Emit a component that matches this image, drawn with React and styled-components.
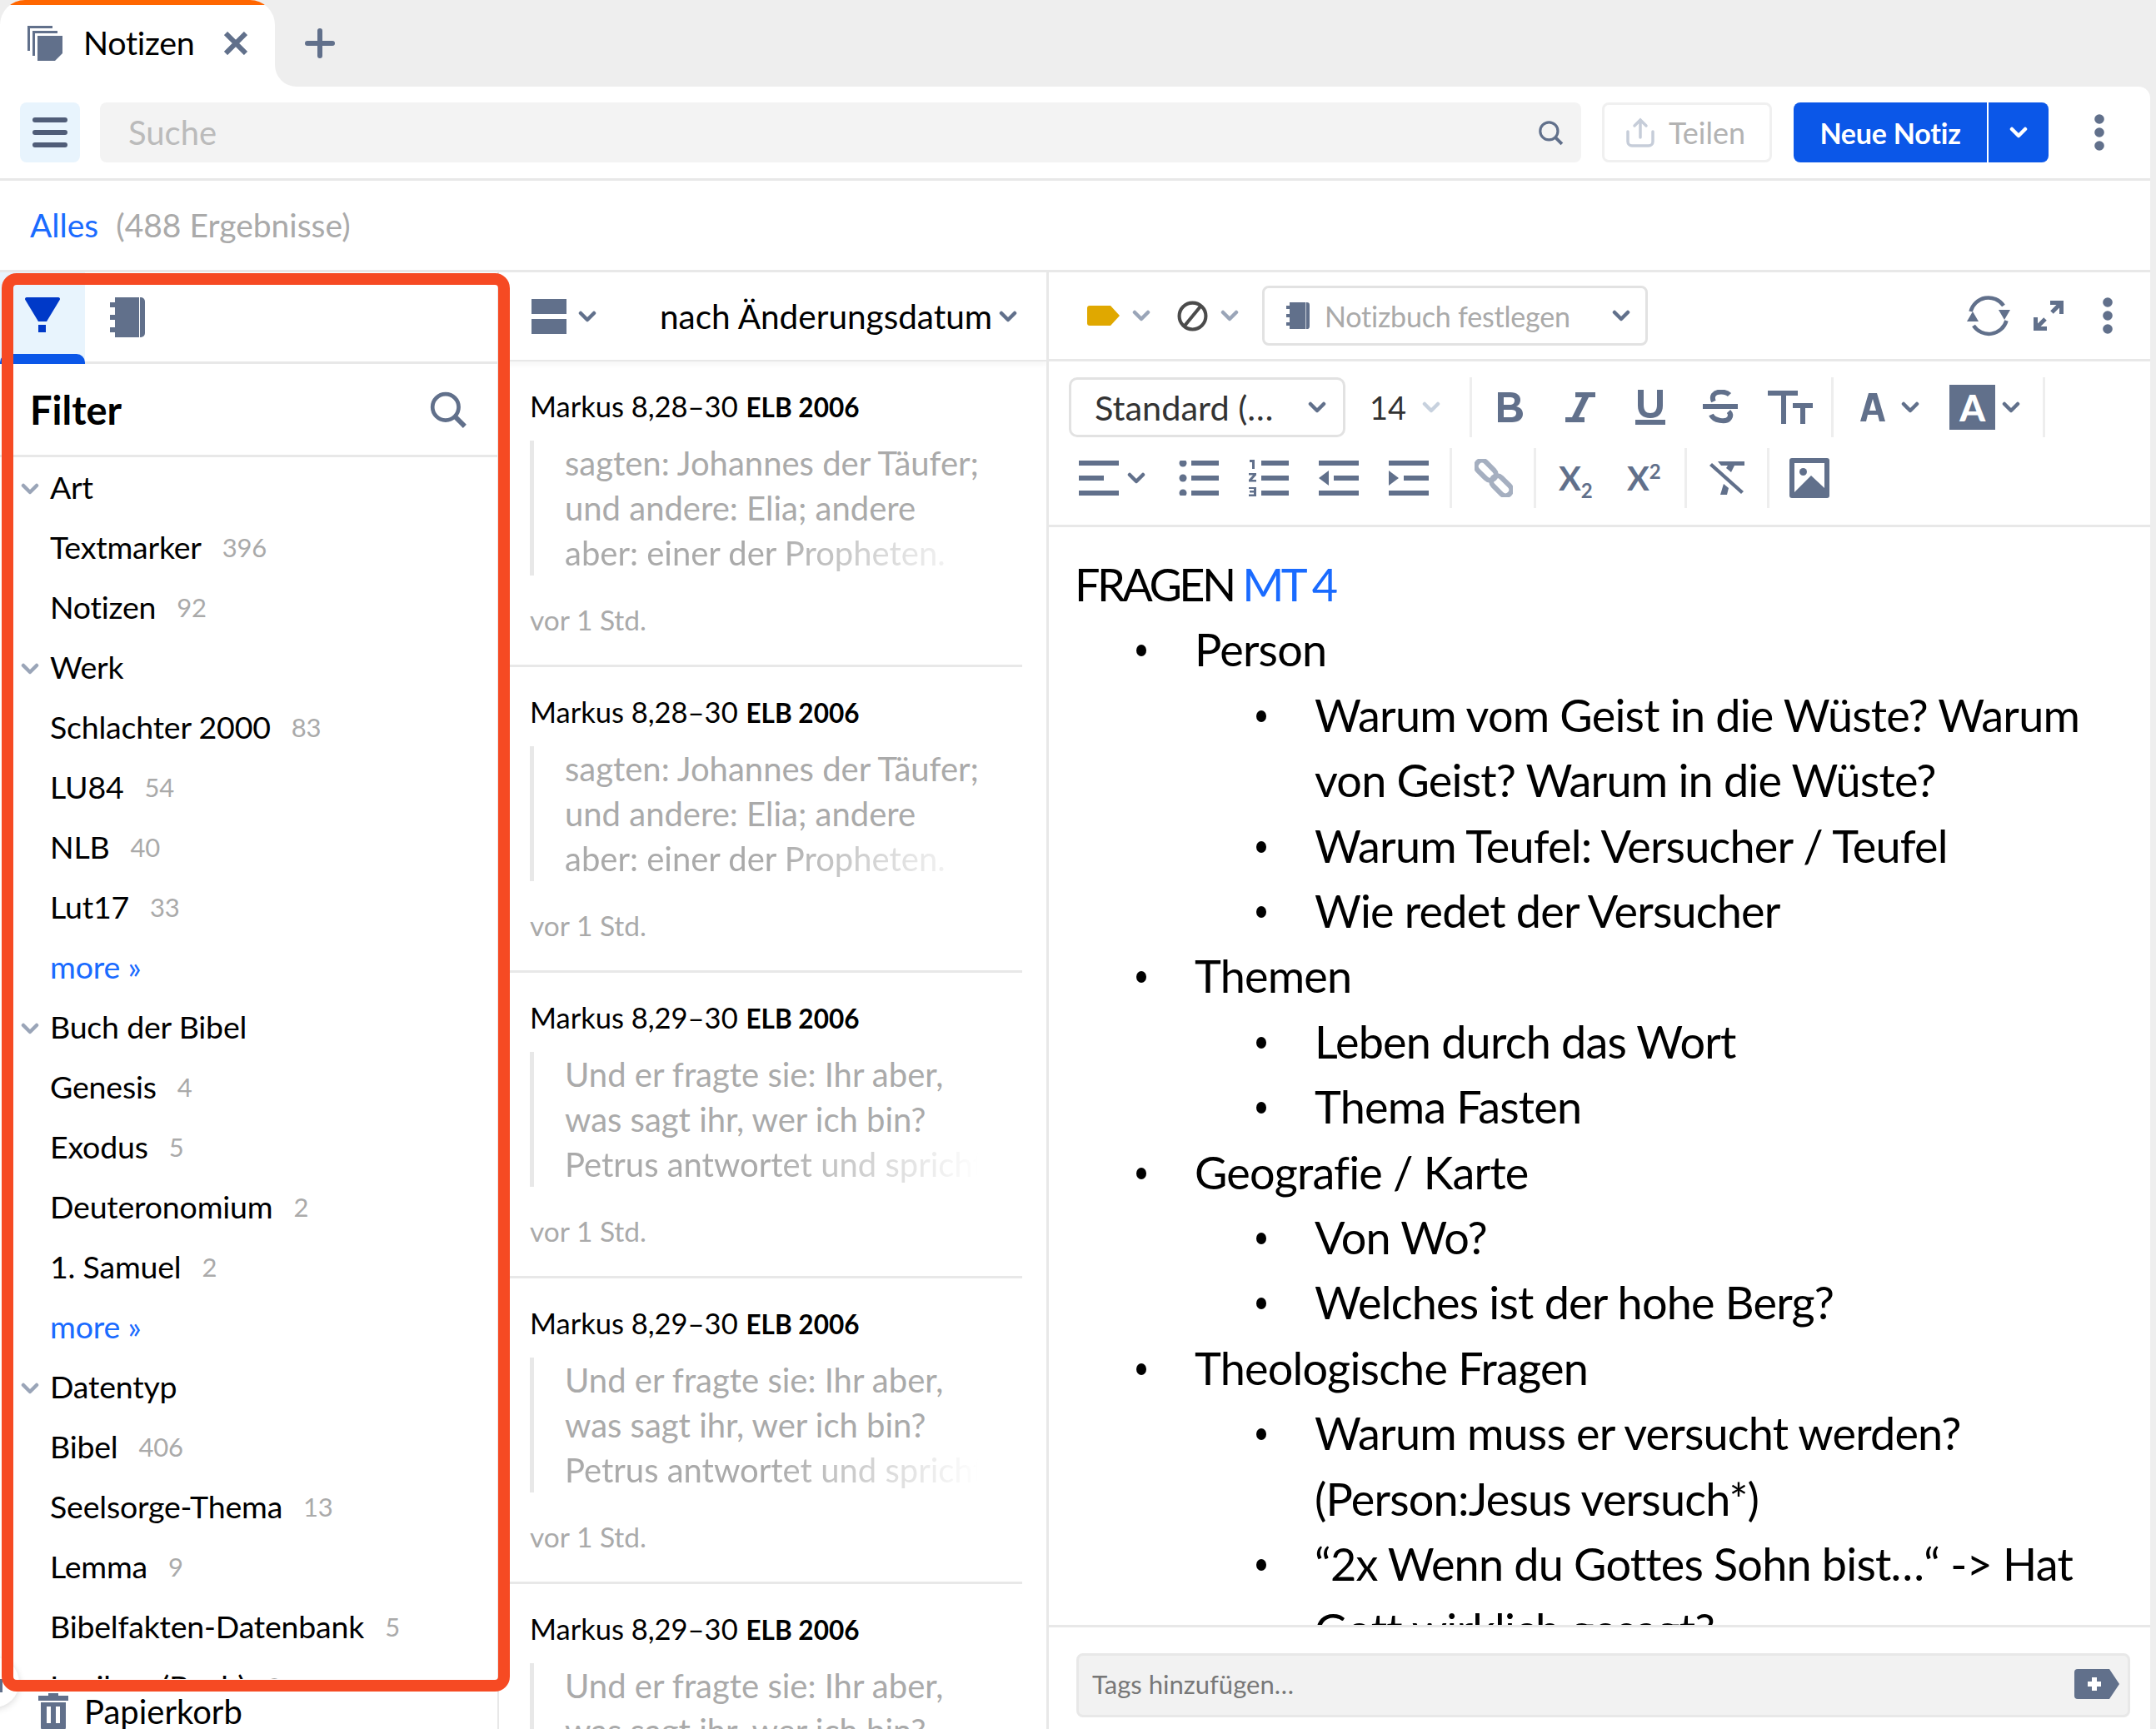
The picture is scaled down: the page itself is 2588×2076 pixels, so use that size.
import React from 'react';
import styled, { createGlobalStyle } from 'styled-components';

const slate = '#61708b';
const line = '#e8e8e8';
const blue = '#0b57e8';
const link = '#1a6bff';

const GlobalStyle = createGlobalStyle`
  html, body {
    margin: 0;
    padding: 0;
    background: #eeeeee;
  }
  * {
    box-sizing: border-box;
  }
`;

const filterRows = [
  { head: 'Art' },
  { label: 'Textmarker', count: 396 },
  { label: 'Notizen', count: 92 },
  { head: 'Werk' },
  { label: 'Schlachter 2000', count: 83 },
  { label: 'LU84', count: 54 },
  { label: 'NLB', count: 40 },
  { label: 'Lut17', count: 33 },
  { more: true },
  { head: 'Buch der Bibel' },
  { label: 'Genesis', count: 4 },
  { label: 'Exodus', count: 5 },
  { label: 'Deuteronomium', count: 2 },
  { label: '1. Samuel', count: 2 },
  { more: true },
  { head: 'Datentyp' },
  { label: 'Bibel', count: 406 },
  { label: 'Seelsorge-Thema', count: 13 },
  { label: 'Lemma', count: 9 },
  { label: 'Bibelfakten-Datenbank', count: 5 },
  { label: 'Lexikon (Buch)', count: 3 },
];

const verseA = ['sagten: Johannes der Täufer;', 'und andere: Elia; andere', 'aber: einer der Propheten.'];
const verseB = ['Und er fragte sie: Ihr aber,', 'was sagt ihr, wer ich bin?', 'Petrus antwortet und spricht'];

const notes = [
  { ref: 'Markus 8,28–30', lines: verseA },
  { ref: 'Markus 8,28–30', lines: verseA },
  { ref: 'Markus 8,29–30', lines: verseB },
  { ref: 'Markus 8,29–30', lines: verseB },
  { ref: 'Markus 8,29–30', lines: verseB },
];

const Chevron = ({ color = slate }) => (
  <svg width="22" height="14" viewBox="0 0 22 14" fill="none" stroke={color} strokeWidth="4.5" strokeLinecap="round" strokeLinejoin="round">
    <path d="M3 3l8 8 8-8" />
  </svg>
);

const SearchIcon = ({ size = 44 }) => (
  <svg width={size} height={size} viewBox="0 0 44 44" fill="none" stroke={slate} strokeWidth="4.5">
    <circle cx="19" cy="19" r="15" />
    <path d="M30 30l11 11" strokeWidth="5.5" />
  </svg>
);

const Kebab = () => (
  <svg width="12" height="44" viewBox="0 0 12 44" fill={slate}>
    <circle cx="6" cy="6" r="5.8" />
    <circle cx="6" cy="22" r="5.8" />
    <circle cx="6" cy="38" r="5.8" />
  </svg>
);

const NotebookIcon = ({ w = 42, h = 48 }) => (
  <svg width={w} height={h} viewBox="0 0 42 48" fill={slate}>
    <rect x="6" y="0" width="29" height="48" />
    <rect x="0" y="6" width="7" height="6" />
    <rect x="0" y="21" width="7" height="6" />
    <rect x="0" y="36" width="7" height="6" />
    <path d="M36 0h1a5 5 0 0 1 5 5v38a5 5 0 0 1-5 5h-1z" />
  </svg>
);

const App = () => (
  <>
    <GlobalStyle />
    <Page>
      <TabBar>
        <Tab>
          <svg width="42" height="42" viewBox="0 0 42 42" fill={slate}>
            <path d="M0 0h30v3H3v27H0z" />
            <path d="M6 6h30v3H9v27H6z" />
            <path d="M12 12h30v21h-9v9H12z" />
            <path d="M33 42v-9h9z" />
          </svg>
          <TabLabel>Notizen</TabLabel>
          <CloseIcon width="28" height="28" viewBox="0 0 28 28" stroke={slate} strokeWidth="6">
            <path d="M2 2l24 24M26 2L2 26" />
          </CloseIcon>
        </Tab>
        <TabRest>
          <svg width="36" height="36" viewBox="0 0 36 36" stroke={slate} strokeWidth="6" strokeLinecap="round">
            <path d="M18 3v30M3 18h30" />
          </svg>
        </TabRest>
      </TabBar>

      <Main>
        <TopBar>
          <MenuButton>
            <MenuLine />
            <MenuLine />
            <MenuLine />
          </MenuButton>
          <SearchField>
            <span>Suche</span>
            <SearchIcon size={31} />
          </SearchField>
          <ShareButton>
            <svg width="34" height="36" viewBox="0 0 34 36" fill="none" stroke="#c6cdd9" strokeWidth="3.5" strokeLinecap="round">
              <path d="M17 24V3M10 10l7-7 7 7" />
              <path d="M2 17v12a5 5 0 0 0 5 5h20a5 5 0 0 0 5-5V17" />
            </svg>
            Teilen
          </ShareButton>
          <PrimaryButton>Neue Notiz</PrimaryButton>
          <PrimaryCaret>
            <Chevron color="#ffffff" />
          </PrimaryCaret>
          <TopKebab>
            <Kebab />
          </TopKebab>
        </TopBar>

        <ResultBar>
          <ResultLink>Alles</ResultLink>
          <ResultCount>(488 Ergebnisse)</ResultCount>
        </ResultBar>

        <Panels>
          <Sidebar>
            <SideTabs>
              <SideTab $active>
                <svg width="42" height="42" viewBox="0 0 42 42" fill="#0039c8">
                  <path d="M2 0h38a2 2 0 0 1 1.700 3L26 29H16L.3 3A2 2 0 0 1 2 0z" />
                  <rect x="16" y="33" width="9" height="9" />
                </svg>
              </SideTab>
              <SideTab>
                <NotebookIcon />
              </SideTab>
            </SideTabs>
            <FilterHead>
              <FilterTitle>Filter</FilterTitle>
              <SearchIcon size={46} />
            </FilterHead>
            <FilterList>
              {filterRows.map((row, i) => {
                if (row.head) {
                  return (
                    <FilterRow key={i}>
                      <HeadCaret>
                        <Chevron color="#9aa5b8" />
                      </HeadCaret>
                      {row.head}
                    </FilterRow>
                  );
                }
                if (row.more) {
                  return <MoreRow key={i}>more »</MoreRow>;
                }
                return (
                  <FilterRow key={i}>
                    {row.label}
                    <Count>{row.count}</Count>
                  </FilterRow>
                );
              })}
            </FilterList>
            <TrashRow>
              <svg width="36" height="44" viewBox="0 0 36 44" fill={slate}>
                <path d="M12 0h12v3h12v6H0V3h12z" />
                <path fillRule="evenodd" d="M3 11h30v30a3 3 0 0 1-3 3H6a3 3 0 0 1-3-3zM10 16v20h5V16zM21 16v20h5V16z" />
              </svg>
              Papierkorb
            </TrashRow>
            <CollapseHandle />
          </Sidebar>

          <NoteColumn>
            <NoteHead>
              <ViewToggle>
                <svg width="42" height="42" viewBox="0 0 42 42" fill={slate}>
                  <rect width="42" height="18" />
                  <rect y="24" width="42" height="18" />
                </svg>
                <Chevron />
              </ViewToggle>
              <SortLabel>nach Änderungsdatum</SortLabel>
              <Chevron />
            </NoteHead>
            {notes.map((note, i) => (
              <NoteCard key={i}>
                <NoteRef>
                  {note.ref} <small>ELB 2006</small>
                </NoteRef>
                <Quote>
                  {note.lines.map((l, k) => (
                    <QuoteLine key={k} $fade={k === 2}>{l}</QuoteLine>
                  ))}
                </Quote>
                <NoteTime>vor 1 Std.</NoteTime>
              </NoteCard>
            ))}
          </NoteColumn>

          <EditorColumn>
            <DocBar>
              <svg width="39" height="24" viewBox="0 0 39 24" fill="#e0a800">
                <path d="M3 0h25l11 12-11 12H3a3 3 0 0 1-3-3V3a3 3 0 0 1 3-3z" />
              </svg>
              <ToolSlot $ml={15}><Chevron color="#9aa5b8" /></ToolSlot>
              <ToolSlot $ml={32}>
                <svg width="37" height="37" viewBox="0 0 36 36" fill="none" stroke="#4b4b4b" strokeWidth="4">
                  <circle cx="18" cy="18" r="15.500" />
                  <path d="M27 7L9 29" />
                </svg>
              </ToolSlot>
              <ToolSlot $ml={15}><Chevron color="#9aa5b8" /></ToolSlot>
              <NotebookSelect>
                <NotebookIcon w={28} h={32} />
                <span>Notizbuch festlegen</span>
                <Chevron />
              </NotebookSelect>
              <DocActions>
                <svg width="52" height="50" viewBox="0 0 52 50" fill="none" stroke={slate} strokeWidth="4.500">
                  <path d="M4.500 20A22 22 0 0 1 44 13" />
                  <path d="M47.500 31A22 22 0 0 1 8 37" />
                  <path d="M38 18h14l-7 12z" fill={slate} stroke="none" />
                  <path d="M0 32h14L7 20z" fill={slate} stroke="none" />
                </svg>
                <ExpandIcon width="36" height="36" viewBox="0 0 36 36" fill="none" stroke={slate} strokeWidth="5">
                  <path d="M20 2.500h13.500V16M33 3L22 14" />
                  <path d="M16 33.500H2.500V20M3 33l11-11" />
                </ExpandIcon>
                <KebabSlot>
                  <Kebab />
                </KebabSlot>
              </DocActions>
            </DocBar>

            <FormatBar>
              <FormatRow>
                <StyleSelect>
                  <span>Standard (…</span>
                  <Chevron />
                </StyleSelect>
                <SizeValue>14</SizeValue>
                <ToolSlot $ml={19}><Chevron color="#c7d1de" /></ToolSlot>
                <ToolSep $ml={35} />
                <ToolSlot $ml={31} $w={30}>
                  <svg width="30" height="36" viewBox="0 0 30 36" fill={slate}>
                    <path fillRule="evenodd" d="M0 0h15c8 0 12 4 12 9 0 4-2 7-5 8 5 1 8 4 8 9 0 6-5 10-13 10H0zM7 6v9h7c4 0 6-2 6-5s-2-4-6-4zM7 21v9h8c5 0 7-2 7-5s-2-4-7-4z" />
                  </svg>
                </ToolSlot>
                <ToolSlot $ml={51} $w={36}>
                  <svg width="36" height="36" viewBox="0 0 36 36" fill={slate}>
                    <path d="M12 0h24v6h-8L16 30h7v6H0v-6h8L20 6h-8z" />
                  </svg>
                </ToolSlot>
                <ToolSlot $ml={48} $w={36}>
                  <svg width="36" height="42" viewBox="0 0 36 42" fill={slate}>
                    <path d="M3 0h7v18c0 7 3 10 8 10s8-3 8-10V0h7v19c0 10-6 15-15 15S3 29 3 19z" />
                    <rect y="36" width="36" height="6" />
                  </svg>
                </ToolSlot>
                <ToolSlot $ml={45} $w={42}>
                  <svg width="42" height="42" viewBox="0 0 42 42" fill="none" stroke={slate} strokeWidth="6">
                    <path d="M32 6C28 2 17 1 13 6c-2 3-1 6 0 8" />
                    <path d="M10 30c3 7 18 10 22 4 2-3 1-6-1-8" />
                    <path d="M0 20h42" />
                  </svg>
                </ToolSlot>
                <ToolSlot $ml={36} $w={54}>
                  <svg width="54" height="40" viewBox="0 0 54 40" fill={slate}>
                    <path d="M0 0h36v6H22v34h-6V6H0z" />
                    <path d="M30 15h24v6H45v19h-6V21h-9z" />
                  </svg>
                </ToolSlot>
                <ToolSep $ml={22} />
                <ToolSlot $ml={32} $w={30}>
                  <svg width="30" height="34" viewBox="0 0 30 34" fill={slate}>
                    <path fillRule="evenodd" d="M10 0h10l10 34h-7l-2-8H9l-2 8H0zM15 7l-4 14h8z" />
                  </svg>
                </ToolSlot>
                <ToolSlot $ml={19}><Chevron /></ToolSlot>
                <ColorBox $ml={36}>A</ColorBox>
                <ToolSlot $ml={8}><Chevron /></ToolSlot>
                <ToolSep $ml={27} />
              </FormatRow>
              <FormatRow>
                <ToolSlot $ml={12} $w={48}>
                  <svg width="48" height="42" viewBox="0 0 48 42" fill={slate}>
                    <rect width="48" height="6" />
                    <rect y="18" width="30" height="6" />
                    <rect y="36" width="48" height="6" />
                  </svg>
                </ToolSlot>
                <ToolSlot $ml={10}><Chevron /></ToolSlot>
                <ToolSlot $ml={40} $w={48}>
                  <svg width="48" height="42" viewBox="0 0 48 42" fill={slate}>
                    <circle cx="5" cy="3" r="4.500" /><rect x="15" width="33" height="6" />
                    <circle cx="5" cy="21" r="4.500" /><rect x="15" y="18" width="33" height="6" />
                    <circle cx="5" cy="39" r="4.500" /><rect x="15" y="36" width="33" height="6" />
                  </svg>
                </ToolSlot>
                <ToolSlot $ml={36} $w={48}>
                  <svg width="48" height="44" viewBox="0 0 48 44" fill={slate}>
                    <path d="M1 0h6v11H4V3H1z" /><rect x="15" y="1" width="33" height="6" />
                    <path d="M0 16h9v2.500L4 24h5v2.500H0V24l5-5.500H0z" /><rect x="15" y="19" width="33" height="6" />
                    <path d="M0 33h9v11H0v-2.500h6v-2H1v-2.500h5v-2H0z" /><rect x="15" y="37" width="33" height="6" />
                  </svg>
                </ToolSlot>
                <ToolSlot $ml={36} $w={48}>
                  <svg width="48" height="42" viewBox="0 0 48 42" fill={slate}>
                    <rect width="48" height="6" />
                    <path d="M12 12v18L0 21z" /><rect x="18" y="18" width="30" height="6" />
                    <rect y="36" width="48" height="6" />
                  </svg>
                </ToolSlot>
                <ToolSlot $ml={36} $w={48}>
                  <svg width="48" height="42" viewBox="0 0 48 42" fill={slate}>
                    <rect width="48" height="6" />
                    <path d="M0 12v18l12-9z" /><rect x="18" y="18" width="30" height="6" />
                    <rect y="36" width="48" height="6" />
                  </svg>
                </ToolSlot>
                <ToolSep $ml={25} />
                <ToolSlot $ml={27} $w={46}>
                  <svg width="46" height="46" viewBox="0 0 46 46" fill="none" stroke="#a5afc0" strokeWidth="6">
                    <g transform="rotate(45 23 23)">
                      <rect x="-4" y="16" width="28" height="14" rx="7" />
                      <rect x="22" y="16" width="28" height="14" rx="7" />
                    </g>
                  </svg>
                </ToolSlot>
                <ToolSep $ml={25} />
                <SubSup $ml={27}>X<sub>2</sub></SubSup>
                <SubSup $ml={38}>X<sup>2</sup></SubSup>
                <ToolSep $ml={25} />
                <ToolSlot $ml={27} $w={42}>
                  <svg width="42" height="40" viewBox="0 0 42 40" fill={slate}>
                    <path d="M10 0h32v5H30l-4 8-6-5 2-3H14z" />
                    <path d="M17 27l6 5-2 8h-8z" />
                    <path d="M3 2l38 34-3 3L0 5z" />
                  </svg>
                </ToolSlot>
                <ToolSep $ml={27} />
                <ToolSlot $ml={24} $w={48}>
                  <svg width="48" height="48" viewBox="0 0 48 48">
                    <rect width="48" height="48" rx="3" fill={slate} />
                    <rect x="6" y="6" width="36" height="36" fill="#fff" />
                    <circle cx="16.500" cy="16.500" r="4.500" fill={slate} />
                    <path d="M6 41l20-20 16 15v6H6z" fill={slate} />
                  </svg>
                </ToolSlot>
              </FormatRow>
            </FormatBar>

            <EditorBody>
              <Heading>FRAGEN <EditorLink>MT 4</EditorLink></Heading>
              <Level>
                <Item>Person</Item>
                <Level>
                  <Item>Warum vom Geist in die Wüste? Warum von Geist? Warum in die Wüste?</Item>
                  <Item>Warum Teufel: Versucher / Teufel</Item>
                  <Item>Wie redet der Versucher</Item>
                </Level>
                <Item>Themen</Item>
                <Level>
                  <Item>Leben durch das Wort</Item>
                  <Item>Thema Fasten</Item>
                </Level>
                <Item>Geografie / Karte</Item>
                <Level>
                  <Item>Von Wo?</Item>
                  <Item>Welches ist der hohe Berg?</Item>
                </Level>
                <Item>Theologische Fragen</Item>
                <Level>
                  <Item>Warum muss er versucht werden? (Person:Jesus versuch*)</Item>
                  <Item>“2x Wenn du Gottes Sohn bist…“ -&gt; Hat Gott wirklich gesagt?</Item>
                </Level>
              </Level>
            </EditorBody>

            <TagBar>
              <TagInput>
                <span>Tags hinzufügen…</span>
                <svg width="54" height="36" viewBox="0 0 54 36">
                  <path d="M4 0h38l12 18-12 18H4a4 4 0 0 1-4-4V4a4 4 0 0 1 4-4z" fill={slate} />
                  <path d="M21 10h6v5h5v6h-5v5h-6v-5h-5v-6h5z" fill="#fff" />
                </svg>
              </TagInput>
            </TagBar>
          </EditorColumn>
        </Panels>
      </Main>

      <Highlight />
    </Page>
  </>
);

export default App;

const sans = `Lato, "Noto Sans", sans-serif`;

const Page = styled.div`
  position: relative;
  width: 2588px;
  height: 2076px;
  overflow: hidden;
  background: #eeeeee;
  font-family: ${sans};
  color: #000;
`;

const TabBar = styled.div`
  display: flex;
  height: 104px;
  background: linear-gradient(#eeeeee 50%, #fff 50%);
`;

const Tab = styled.div`
  position: relative;
  display: flex;
  align-items: center;
  width: 330px;
  padding: 0 0 0 33px;
  background: #fff;
  border-radius: 30px 30px 0 0;
  overflow: hidden;
  &::before {
    content: '';
    position: absolute;
    top: 0;
    left: 0;
    right: 0;
    height: 6px;
    background: #ff6600;
  }
`;

const TabLabel = styled.span`
  margin: 0 0 3px 25px;
  font-size: 39.500px;
  letter-spacing: -0.3px;
`;

const CloseIcon = styled.svg`
  margin-left: 35px;
`;

const TabRest = styled.div`
  flex: 1;
  display: flex;
  align-items: center;
  padding-left: 36px;
  background: #eeeeee;
  border-bottom-left-radius: 26px;
`;

const Main = styled.div`
  width: 2581px;
  height: 1972px;
  background: #fff;
  border-top-right-radius: 14px;
  overflow: hidden;
`;

const TopBar = styled.div`
  display: flex;
  align-items: center;
  height: 113px;
  padding-left: 24px;
  border-bottom: 3px solid ${line};
`;

const MenuButton = styled.div`
  display: flex;
  flex-direction: column;
  justify-content: center;
  gap: 9px;
  width: 72px;
  height: 72px;
  padding: 0 15px;
  background: #e8f4fd;
  border-radius: 8px;
`;

const MenuLine = styled.div`
  height: 6px;
  background: #505d78;
  border-radius: 3px;
`;

const SearchField = styled.div`
  display: flex;
  align-items: center;
  justify-content: space-between;
  width: 1778px;
  height: 72px;
  margin-left: 24px;
  padding: 0 21px 0 34px;
  background: #f3f3f3;
  border-radius: 8px;
  font-size: 40px;
  color: #bbbbbb;
`;

const ShareButton = styled.div`
  display: flex;
  align-items: center;
  gap: 17px;
  width: 204px;
  height: 72px;
  margin-left: 25px;
  padding-left: 26px;
  border: 3px solid #f0f0f0;
  border-radius: 8px;
  font-size: 36px;
  color: #b3b3b3;
`;

const PrimaryButton = styled.div`
  display: flex;
  align-items: center;
  justify-content: center;
  width: 232px;
  height: 72px;
  margin-left: 26px;
  background: ${blue};
  border-radius: 8px 0 0 8px;
  color: #fff;
  font-size: 34px;
  letter-spacing: -0.2px;
  font-weight: 700;
`;

const PrimaryCaret = styled.div`
  display: flex;
  align-items: center;
  justify-content: center;
  width: 72px;
  height: 72px;
  margin-left: 2px;
  background: ${blue};
  border-radius: 0 8px 8px 0;
`;

const TopKebab = styled.div`
  display: flex;
  margin-left: 55px;
`;

const ResultBar = styled.div`
  display: flex;
  align-items: center;
  gap: 21px;
  height: 110px;
  padding: 0 0 2px 36px;
  border-bottom: 3px solid ${line};
  font-size: 39px;
`;

const ResultLink = styled.span`
  color: ${link};
`;

const ResultCount = styled.span`
  color: #aaaaaa;
`;

const Panels = styled.div`
  display: flex;
  height: 1749px;
`;

const Sidebar = styled.div`
  position: relative;
  flex: 0 0 599px;
  border-right: 2px solid ${line};
`;

const SideTabs = styled.div`
  display: flex;
  height: 110px;
  border-bottom: 3px solid ${line};
`;

const SideTab = styled.div`
  position: relative;
  display: flex;
  justify-content: center;
  padding-top: 30px;
  margin-right: ${(p) => (p.$active ? '30px' : '0')};
  width: ${(p) => (p.$active ? '102px' : '42px')};
  background: ${(p) => (p.$active ? '#e8f4fd' : 'transparent')};
  ${(p) => p.$active && `
    &::after {
      content: '';
      position: absolute;
      left: 0;
      right: 0;
      bottom: -3px;
      height: 12px;
      background: ${blue};
      border-radius: 10px 10px 0 0;
    }
  `}
`;

const FilterHead = styled.div`
  display: flex;
  align-items: center;
  justify-content: space-between;
  height: 112px;
  padding: 0 36px;
  border-bottom: 3px solid ${line};
`;

const FilterTitle = styled.div`
  font-size: 47px;
  font-weight: 700;
`;

const FilterList = styled.div`
  height: 1467px;
  overflow: hidden;
`;

const FilterRow = styled.div`
  position: relative;
  display: flex;
  align-items: center;
  height: 72px;
  padding: 0 0 2px 60px;
  font-size: 37.500px;
  letter-spacing: -0.2px;
`;

const HeadCaret = styled.span`
  position: absolute;
  left: 25px;
  top: 31px;
  display: flex;
`;

const MoreRow = styled(FilterRow)`
  color: ${link};
`;

const Count = styled.span`
  margin: 2px 0 0 25px;
  font-size: 31px;
  color: #aaaaaa;
`;

const TrashRow = styled.div`
  display: flex;
  align-items: center;
  gap: 19px;
  height: 72px;
  padding: 6px 0 0 46px;
  font-size: 40px;
`;

const CollapseHandle = styled.div`
  position: absolute;
  left: -37px;
  top: 1663px;
  width: 60px;
  height: 60px;
  background: #fff;
  border-radius: 50%;
  box-shadow: 0 2px 8px rgba(0, 0, 0, 0.15);
  &::after {
    content: '';
    position: absolute;
    left: 37px;
    top: 26px;
    width: 3px;
    height: 16px;
    background: ${slate};
  }
`;

const NoteColumn = styled.div`
  flex: 0 0 660px;
  border-right: 3px solid ${line};
  overflow: hidden;
`;

const NoteHead = styled.div`
  display: flex;
  align-items: center;
  height: 107px;
  padding-left: 39px;
  border-bottom: 2px solid ${line};
  box-shadow: 0 4px 6px rgba(0, 0, 0, 0.04);
`;

const ViewToggle = styled.div`
  display: flex;
  align-items: center;
  gap: 14px;
`;

const SortLabel = styled.span`
  margin: 0 8px 0 76px;
  font-size: 40.500px;
`;

const NoteCard = styled.div`
  width: 628px;
  padding: 30px 0 29px 37px;
  border-bottom: 3px solid ${line};
`;

const NoteRef = styled.div`
  height: 48px;
  line-height: 48px;
  font-size: 34.500px;
  small {
    margin-left: 1px;
    font-size: 31.500px;
    font-weight: 700;
  }
`;

const Quote = styled.div`
  margin-top: 17px;
  padding-left: 36px;
  border-left: 5px solid ${line};
  color: #aaaaaa;
  font-size: 40px;
  line-height: 54px;
`;

const QuoteLine = styled.div`
  width: ${(p) => (p.$fade ? '497px' : '540px')};
  height: 54px;
  padding-left: 1px;
  white-space: nowrap;
  overflow: hidden;
  ${(p) => p.$fade && `
    -webkit-mask-image: linear-gradient(to right, #000 50%, transparent 100%);
    mask-image: linear-gradient(to right, #000 50%, transparent 100%);
  `}
`;

const NoteTime = styled.div`
  height: 48px;
  margin-top: 30px;
  line-height: 46px;
  font-size: 33.500px;
  color: #aaaaaa;
`;

const EditorColumn = styled.div`
  display: flex;
  flex-direction: column;
  flex: 1;
  min-width: 0;
`;

const DocBar = styled.div`
  display: flex;
  align-items: center;
  height: 107px;
  padding: 0 45px 0 46px;
  border-bottom: 3px solid ${line};
`;

const ToolSlot = styled.div`
  display: flex;
  align-items: center;
  justify-content: center;
  flex: none;
  margin-left: ${(p) => p.$ml || 0}px;
  ${(p) => p.$w && `width: ${p.$w}px;`}
`;

const NotebookSelect = styled.div`
  display: flex;
  align-items: center;
  flex: none;
  width: 463px;
  height: 72px;
  margin-left: 28px;
  padding: 0 18px 0 26px;
  border: 3px solid #e2e2e2;
  border-radius: 8px;
  font-size: 34px;
  letter-spacing: -0.2px;
  color: #aaaaaa;
  span {
    flex: 1;
    margin-left: 18px;
  }
`;

const DocActions = styled.div`
  display: flex;
  align-items: center;
  margin-left: auto;
`;

const ExpandIcon = styled.svg`
  margin-left: 28px;
`;

const KebabSlot = styled.div`
  display: flex;
  margin-left: 47px;
`;

const FormatBar = styled.div`
  display: flex;
  flex-direction: column;
  gap: 13px;
  height: 199px;
  padding: 19px 0 0 24px;
  border-bottom: 3px solid ${line};
`;

const FormatRow = styled.div`
  display: flex;
  align-items: center;
  height: 72px;
`;

const StyleSelect = styled.div`
  display: flex;
  align-items: center;
  justify-content: space-between;
  flex: none;
  width: 332px;
  height: 72px;
  padding: 0 20px 0 28px;
  border: 3px solid #e2e2e2;
  border-radius: 10px;
  font-size: 41.500px;
  color: #333;
`;

const SizeValue = styled.span`
  margin-left: 29px;
  font-size: 38px;
  color: #333;
`;

const ToolSep = styled.div`
  flex: none;
  width: 3px;
  height: 72px;
  margin-left: ${(p) => p.$ml || 0}px;
  background: #eeeeee;
`;

const ColorBox = styled.div`
  display: flex;
  align-items: center;
  justify-content: center;
  flex: none;
  width: 55px;
  height: 54px;
  margin-left: ${(p) => p.$ml || 0}px;
  background: ${slate};
  color: #fff;
  font-size: 44px;
  font-weight: 900;
`;

const SubSup = styled.div`
  flex: none;
  width: 44px;
  margin-left: ${(p) => p.$ml || 0}px;
  color: ${slate};
  font-size: 40px;
  font-weight: 700;
  line-height: 1;
  white-space: nowrap;
  sub, sup {
    font-size: 24px;
    line-height: 0;
  }
`;

const EditorBody = styled.div`
  flex: 1;
  min-height: 0;
  padding: 30px 40px 0 31px;
  overflow: hidden;
  font-size: 54px;
  letter-spacing: -0.8px;
  line-height: 78.4px;
`;

const Heading = styled.div`
  letter-spacing: -3.500px;
`;

const EditorLink = styled.span`
  color: ${link};
`;

const Level = styled.div`
  padding-left: 144px;
`;

const Item = styled.div`
  position: relative;
  &::before {
    content: '';
    position: absolute;
    left: -70px;
    top: 33px;
    width: 12px;
    height: 14px;
    background: #000;
    border-radius: 50%;
  }
`;

const TagBar = styled.div`
  flex: 0 0 125px;
  padding: 31px 24px 0 33px;
  border-top: 3px solid ${line};
`;

const TagInput = styled.div`
  display: flex;
  align-items: center;
  justify-content: space-between;
  height: 77px;
  padding: 0 10px 3px 16px;
  background: #f2f2f2;
  border: 3px solid ${line};
  border-radius: 8px;
  font-size: 31px;
  color: #777;
`;

const Highlight = styled.div`
  position: absolute;
  left: 2px;
  top: 328px;
  width: 610px;
  height: 1703px;
  border: 14px solid #f64a23;
  border-radius: 18px;
  pointer-events: none;
`;
